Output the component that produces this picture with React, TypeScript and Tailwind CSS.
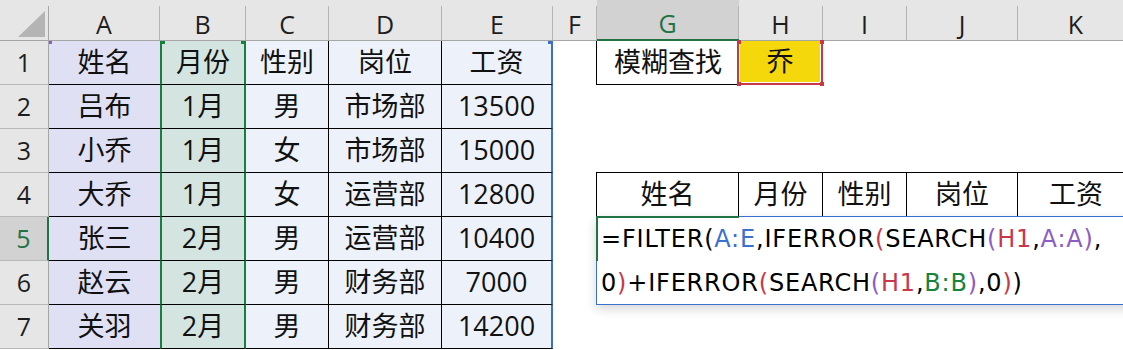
import React from 'react';

const COLS = ['A', 'B', 'C', 'D', 'E', 'F', 'G', 'H', 'I', 'J', 'K'];

const DATA = [
  ['姓名', '月份', '性别', '岗位', '工资'],
  ['吕布', '1月', '男', '市场部', '13500'],
  ['小乔', '1月', '女', '市场部', '15000'],
  ['大乔', '1月', '女', '运营部', '12800'],
  ['张三', '2月', '男', '运营部', '10400'],
  ['赵云', '2月', '男', '财务部', '7000'],
  ['关羽', '2月', '男', '财务部', '14200'],
];

const HEAD2 = ['姓名', '月份', '性别', '岗位', '工资'];

// Excel reference highlight colours
const BLUE = 'text-[#3b70cf]';
const RED = 'text-[#c8384a]';
const PURPLE = 'text-[#8d5cc6]';
const GREEN = 'text-[#17843a]';

const dataCls = [
  'bg-[#dfe0f4] border-b border-black',
  'bg-[#d4e5e1] border-b border-b-black border-x-2 border-x-[#16803c]',
  'bg-[#edf1f9] border-b border-r border-black',
  'bg-[#edf1f9] border-b border-r border-black',
  'bg-[#edf1f9] border-b border-b-black border-r-2 border-r-[#3b70cf]',
];

function ColHeader({ label }: { label: string }) {
  const active = label === 'G';
  return (
    <div
      className={
        active
          ? 'bg-[#d2d2d2] border-b-2 border-[#217346] pt-[6px]'
          : 'bg-[#e6e6e6] border-b border-[#a6a6a6] pt-[6px]'
      }
    >
      <div
        className={
          'h-full border-r border-[#b4b4b4] flex items-center justify-center pt-[3px] text-[25px] ' +
          (active ? 'text-[#217346]' : 'text-[#1e1e1e]')
        }
      >
        {label}
      </div>
    </div>
  );
}

function RowHeader({ n }: { n: number }) {
  const active = n === 5;
  return (
    <div
      className={
        'flex items-center justify-center text-[25px] border-b border-b-[#b8b8b8] ' +
        (active
          ? 'bg-[#d2d2d2] text-[#217346] border-r-2 border-r-[#217346]'
          : 'bg-[#e6e6e6] text-[#1e1e1e] border-r border-r-[#a6a6a6]')
      }
    >
      {n}
    </div>
  );
}

export default function App() {
  return (
    <div className="w-[1123px] h-[350px] overflow-hidden bg-white font-['Open_Sans','Noto_Sans_CJK_SC',sans-serif]">
      <div className="grid grid-cols-[49px_111px_86px_83px_113px_111px_44px_142px_84px_84px_111px_116px] grid-rows-[41px_repeat(7,44px)] w-[1134px]">
        {/* corner */}
        <div className="bg-[#e6e6e6] border-b border-[#a6a6a6] pt-[6px]">
          <div className="h-full border-r border-[#a6a6a6] flex items-end justify-end pr-[3px] pb-[3px]">
            <svg width="27" height="26" viewBox="0 0 27 26">
              <polygon points="27,0 27,26 0,26" fill="#b4b4b4" />
            </svg>
          </div>
        </div>
        {COLS.map(c => (
          <ColHeader key={c} label={c} />
        ))}

        {DATA.map((row, ri) => (
          <React.Fragment key={ri}>
            <RowHeader n={ri + 1} />
            {row.map((v, ci) => (
              <div key={ci} className={'relative flex items-center justify-center text-[27px] text-[#111] ' + dataCls[ci]}>
                {v}
                {ri === 0 && ci === 0 && <span className="absolute left-0 top-0 w-[3px] h-[3px] bg-[#8d5cc6]" />}
                {ri === 0 && ci === 1 && (
                  <>
                    <span className="absolute -left-[2px] top-0 w-[5px] h-[3px] bg-[#16803c]" />
                    <span className="absolute -right-[2px] top-0 w-[5px] h-[3px] bg-[#16803c]" />
                  </>
                )}
                {ri === 0 && ci === 4 && <span className="absolute -right-[2px] top-0 w-[5px] h-[3px] bg-[#3b70cf]" />}
              </div>
            ))}
            {/* F */}
            <div />
            {ri === 0 && (
              <>
                <div className="-ml-px border-l border-b border-black flex items-center justify-center text-[27px] text-[#111]">
                  模糊查找
                </div>
                <div className="relative -ml-[2px] border-2 border-t-0 border-[#c8384a] bg-white px-px pb-px">
                  <div className="h-full bg-[#f4d80c] flex items-center justify-center text-[27px] text-[#111]">乔</div>
                  <span className="absolute -left-[2px] -top-px w-[4px] h-[4px] bg-[#c8384a]" />
                  <span className="absolute -right-[3px] -top-px w-[4px] h-[4px] bg-[#c8384a]" />
                  <span className="absolute -left-[2px] -bottom-[3px] w-[4px] h-[4px] bg-[#c8384a]" />
                  <span className="absolute -right-[3px] -bottom-[3px] w-[4px] h-[4px] bg-[#c8384a]" />
                </div>
                <div />
                <div />
                <div />
              </>
            )}
            {ri === 3 &&
              HEAD2.map((h, i) => (
                <div
                  key={h}
                  className={
                    '-mt-px flex items-center justify-center text-[27px] text-[#111] border-t border-b border-black ' +
                    (i === 0 ? '-ml-px border-l border-r ' : i < 4 ? 'border-r ' : '')
                  }
                >
                  {h}
                </div>
              ))}
            {(ri === 1 || ri === 2 || ri === 6) && (
              <>
                <div />
                <div />
                <div />
                <div />
                <div />
              </>
            )}
          </React.Fragment>
        ))}

        {/* formula being edited in G5 */}
        <div className="relative col-start-8 col-end-13 row-start-6 row-end-8 -mt-px -ml-px bg-white border border-[#3b70cf] shadow-[0_4px_10px_rgba(0,0,0,0.16)] pl-[4px] font-['DejaVu_Sans',sans-serif] text-[24px] tracking-[0.8px] leading-[44px] text-black whitespace-nowrap">
          <span className="absolute -left-px -top-px w-[143px] h-[2px] bg-[#217346]" />
          <span className="absolute -left-px -top-px w-[2px] h-[45px] bg-[#217346]" />
          <div>
            =FILTER(<span className={BLUE}>A:E</span>,IFERROR<span className={RED}>(</span>SEARCH
            <span className={PURPLE}>(</span>
            <span className={RED}>H1</span>,<span className={PURPLE}>A:A</span>
            <span className={PURPLE}>)</span>,
          </div>
          <div>
            0<span className={RED}>)</span>+IFERROR<span className={RED}>(</span>SEARCH<span className={PURPLE}>(</span>
            <span className={RED}>H1</span>,<span className={GREEN}>B:B</span>
            <span className={PURPLE}>)</span>,0<span className={RED}>)</span>)
          </div>
        </div>
      </div>
    </div>
  );
}
